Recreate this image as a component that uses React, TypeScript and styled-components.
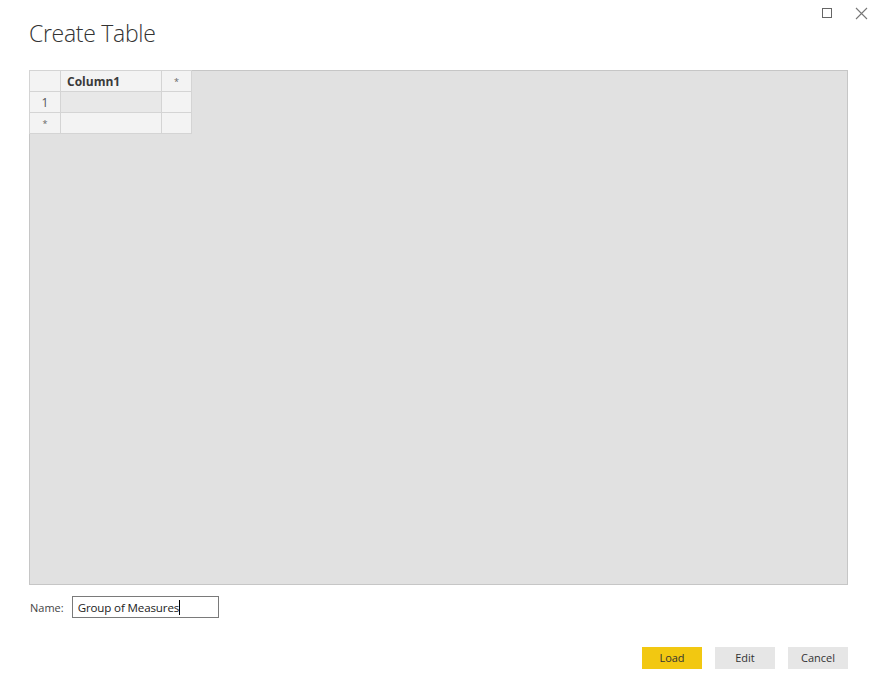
import React from "react";
import styled, { createGlobalStyle } from "styled-components";

const Global = createGlobalStyle`
  html, body { margin: 0; padding: 0; background: #ffffff; }
  body { font-family: "Open Sans", "Noto Sans", sans-serif; }
`;

const Dialog = styled.div`
  width: 878px;
  height: 698px;
  box-sizing: border-box;
  display: flex;
  flex-direction: column;
  padding: 0 30px 0 29px;
  position: relative;
`;

const WindowControls = styled.div`
  position: absolute;
  top: 6px;
  right: 10px;
  display: flex;
  gap: 20px;
  align-items: center;
`;

const IconBtn = styled.div`
  width: 14px;
  height: 14px;
  display: flex;
  align-items: center;
  justify-content: center;
  color: #666;
`;

const Title = styled.h1`
  margin: 17px 0 0 0;
  font-family: "Open Sans", sans-serif;
  font-weight: 300;
  font-size: 23px;
  line-height: 32px;
  color: #333;
  letter-spacing: -0.3px;
`;

const GridArea = styled.div`
  margin-top: 21px;
  height: 515px;
  box-sizing: border-box;
  border: 1px solid #c6c6c6;
  background: #e1e1e1;
`;

const Table = styled.div`
  display: grid;
  grid-template-columns: 31px 101px 30px;
  grid-template-rows: 21px 21px 21px;
  margin: -1px 0 0 -1px;
  width: max-content;
`;

const Cell = styled.div<{ $bg?: string; $color?: string; $bold?: boolean }>`
  box-sizing: border-box;
  border: 1px solid #d4d4d4;
  margin: 0 -1px -1px 0;
  background: ${(p) => p.$bg || "#f3f3f3"};
  color: ${(p) => p.$color || "#333"};
  font-family: "Open Sans", sans-serif;
  font-size: 12px;
  font-weight: ${(p) => (p.$bold ? 700 : 400)};
  display: flex;
  align-items: center;
  justify-content: center;
  height: 22px;
`;

const HeaderCell = styled(Cell)`
  justify-content: flex-start;
  padding-left: 6px;
  font-size: 12px;
  color: #3a3a3a;
`;

const Star = styled.span`
  font-size: 9px;
  line-height: 1;
  margin-top: 1px;
`;

const NameRow = styled.div`
  margin-top: 11px;
  display: flex;
  align-items: center;
  gap: 8px;
  padding-left: 1px;
`;

const Label = styled.label`
  font-family: "Open Sans", sans-serif;
  font-size: 11px;
  color: #444;
`;

const Input = styled.div`
  width: 147px;
  height: 22px;
  box-sizing: border-box;
  border: 1px solid #7a7a7a;
  padding: 0 5px;
  display: flex;
  align-items: center;
  font-family: "Open Sans", sans-serif;
  font-size: 11.6px;
  letter-spacing: -0.15px;
  color: #222;
`;

const Caret = styled.span`
  display: inline-block;
  width: 1px;
  height: 15px;
  background: #000;
`;

const Footer = styled.div`
  margin-top: 29px;
  display: flex;
  justify-content: flex-end;
  gap: 13px;
`;

const Button = styled.div<{ $primary?: boolean }>`
  width: 60px;
  height: 22px;
  display: flex;
  align-items: center;
  justify-content: center;
  background: ${(p) => (p.$primary ? "#f2c811" : "#e6e6e6")};
  color: #333;
  font-family: "Open Sans", sans-serif;
  font-size: 11px;
  line-height: 1;
  padding-bottom: 1px;
  box-sizing: border-box;
`;

export default function App() {
  return (
    <>
      <Global />
      <Dialog>
        <WindowControls>
          <IconBtn>
            <svg width="12" height="12" viewBox="0 0 12 12">
              <rect x="1.5" y="1.5" width="9" height="9" fill="none" stroke="#666" strokeWidth="1" />
            </svg>
          </IconBtn>
          <IconBtn>
            <svg width="13" height="13" viewBox="0 0 13 13">
              <path d="M1 1 L12 12 M12 1 L1 12" stroke="#777" strokeWidth="1.1" fill="none" />
            </svg>
          </IconBtn>
        </WindowControls>
        <Title>Create Table</Title>
        <GridArea>
          <Table>
            <Cell />
            <HeaderCell $bold>Column1</HeaderCell>
            <Cell $color="#666">
              <Star>*</Star>
            </Cell>
            <Cell $color="#555">1</Cell>
            <Cell $bg="#e8e8e8" />
            <Cell />
            <Cell $color="#666">
              <Star>*</Star>
            </Cell>
            <Cell />
            <Cell />
          </Table>
        </GridArea>
        <NameRow>
          <Label>Name:</Label>
          <Input>
            Group of Measures
            <Caret />
          </Input>
        </NameRow>
        <Footer>
          <Button $primary>Load</Button>
          <Button>Edit</Button>
          <Button>Cancel</Button>
        </Footer>
      </Dialog>
    </>
  );
}
